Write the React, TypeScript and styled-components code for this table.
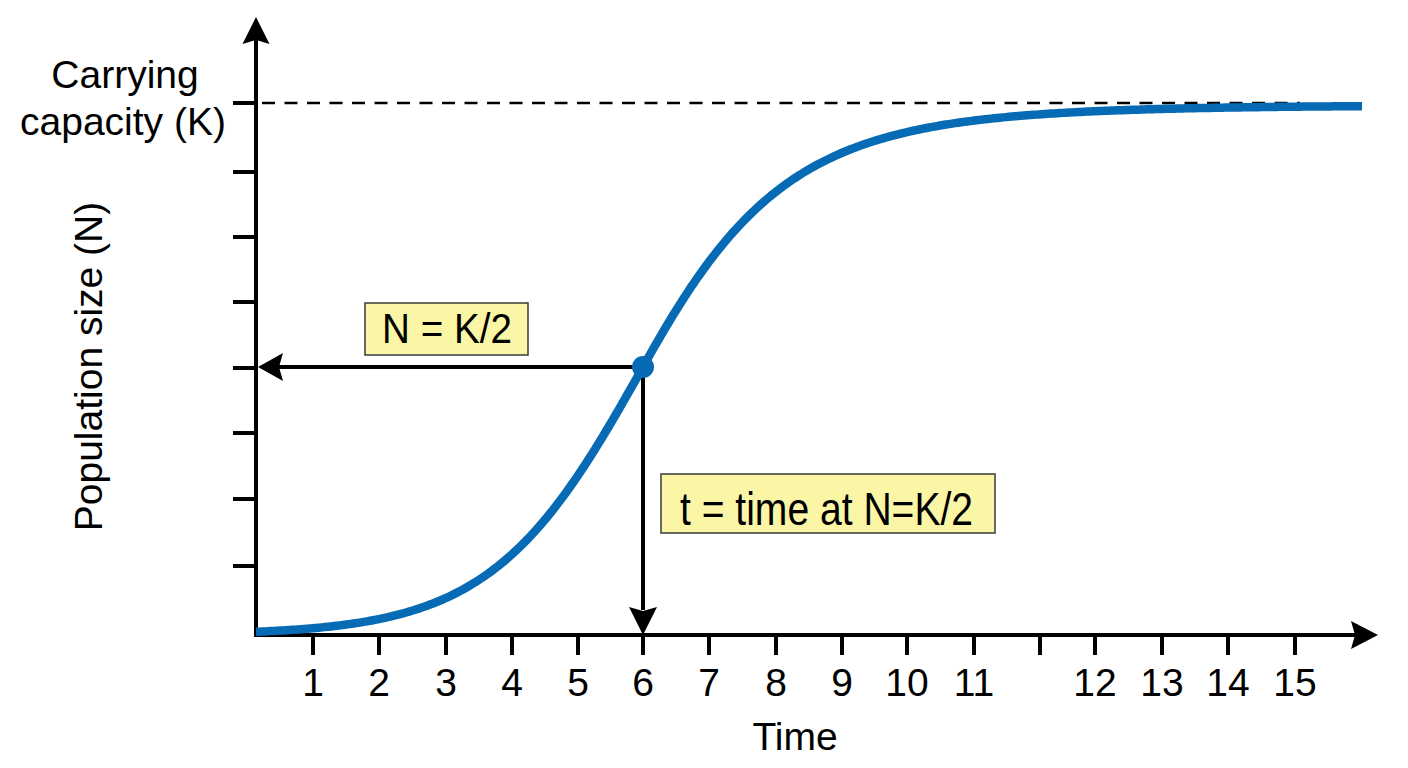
import React from 'react'
import styled, { createGlobalStyle } from 'styled-components'

const GlobalStyle = createGlobalStyle`
  html, body {
    margin: 0;
    padding: 0;
    background: #ffffff;
  }
  body {
    font-family: 'Liberation Sans', Arial, sans-serif;
  }
`

const Page = styled.main`
  width: 1408px;
  height: 768px;
  display: flex;
  align-items: stretch;
  justify-content: stretch;
  overflow: hidden;
  background: #ffffff;
`

const Chart = styled.svg`
  display: block;
  width: 1408px;
  height: 768px;
`

const Axis = styled.line`
  stroke: #000;
  stroke-width: 4;
`

const Tick = styled.line`
  stroke: #000;
  stroke-width: 4;
`

const Pointer = styled.line`
  stroke: #000;
  stroke-width: 4;
`

const Head = styled.polygon`
  fill: #000;
`

const CapacityLine = styled.line`
  stroke: #000;
  stroke-width: 2.5;
  stroke-dasharray: 13 9.5;
`

const Curve = styled.path`
  fill: none;
  stroke: #066bb4;
  stroke-width: 8.5;
  stroke-linecap: butt;
  stroke-linejoin: round;
`

const Marker = styled.circle`
  fill: #066bb4;
`

const Label = styled.text<{ $size?: number }>`
  font-family: 'Liberation Sans', Arial, Helvetica, sans-serif;
  font-size: ${(p) => p.$size ?? 39}px;
  fill: #000;
`

const CalloutBox = styled.rect`
  fill: #fbf6a6;
  stroke: #3a3a3a;
  stroke-width: 1.5;
`

const ORIGIN_X = 256
const ORIGIN_Y = 635
const MID = { x: 643, y: 367 }

const yTicks = [103, 172, 237, 302, 368, 433, 499, 566]

const xTicks: { x: number; label?: string }[] = [
  { x: 313, label: '1' },
  { x: 379, label: '2' },
  { x: 446, label: '3' },
  { x: 512, label: '4' },
  { x: 578, label: '5' },
  { x: 643, label: '6' },
  { x: 709, label: '7' },
  { x: 776, label: '8' },
  { x: 842, label: '9' },
  { x: 907, label: '10' },
  { x: 974, label: '11' },
  { x: 1040 },
  { x: 1095, label: '12' },
  { x: 1162, label: '13' },
  { x: 1228, label: '14' },
  { x: 1295, label: '15' },
]

// growth curve: logistic below the midpoint, slower approach to K above it
function curveY(x: number) {
  const d = x - MID.x
  if (d <= 0) return MID.y + 268 * Math.tanh(0.0066 * -d)
  return MID.y - 262 * Math.tanh(3.43 * Math.log(1 + 0.002 * d))
}

function curvePath(from: number, to: number, step = 3) {
  let d = `M ${from} ${curveY(from).toFixed(2)}`
  for (let x = from + step; x < to; x += step) {
    d += ` L ${x} ${curveY(x).toFixed(2)}`
  }
  d += ` L ${to} ${curveY(to).toFixed(2)}`
  return d
}

export default function App() {
  return (
    <Page>
      <GlobalStyle />
      <Chart viewBox="0 0 1408 768">
        {/* carrying capacity */}
        <CapacityLine x1={262} y1={103} x2={1300} y2={103} />

        {/* axes */}
        <Axis x1={ORIGIN_X} y1={ORIGIN_Y + 2} x2={ORIGIN_X} y2={40} />
        <Head points="256,17 269.5,44 256,40 242.5,44" />
        <Axis x1={ORIGIN_X - 2} y1={ORIGIN_Y} x2={1356} y2={ORIGIN_Y} />
        <Head points="1378,635 1351,621 1355,635 1351,649" />

        {yTicks.map((y) => (
          <Tick key={y} x1={233} y1={y} x2={ORIGIN_X} y2={y} />
        ))}
        {xTicks.map((t) => (
          <Tick key={t.x} x1={t.x} y1={ORIGIN_Y} x2={t.x} y2={655} />
        ))}
        {xTicks.map((t) =>
          t.label ? (
            <Label key={t.x} x={t.x} y={696} textAnchor="middle">
              {t.label}
            </Label>
          ) : null
        )}

        {/* axis titles */}
        <Label x={795} y={750} textAnchor="middle">
          Time
        </Label>
        <Label transform="translate(102 366.5) rotate(-90)" textAnchor="middle">
          Population size (N)
        </Label>
        <Label x={125} y={88} textAnchor="middle">
          Carrying
        </Label>
        <Label x={123} y={135} textAnchor="middle">
          capacity (K)
        </Label>

        {/* half-capacity guides */}
        <Pointer x1={MID.x} y1={MID.y} x2={278} y2={MID.y} />
        <Head points="258,367 283,353 279,367 283,381" />
        <Pointer x1={MID.x} y1={MID.y} x2={MID.x} y2={610} />
        <Head points="643,635 629,607 643,611 657,607" />

        {/* logistic curve */}
        <Curve d={curvePath(ORIGIN_X, 1362)} />
        <Marker cx={MID.x} cy={MID.y} r={11} />

        {/* callouts */}
        <CalloutBox x={365} y={303} width={163} height={52} />
        <Label x={382} y={343} $size={42} textLength={130} lengthAdjust="spacingAndGlyphs">
          N = K/2
        </Label>
        <CalloutBox x={661} y={474} width={334} height={59} />
        <Label x={680} y={525} $size={46} textLength={293} lengthAdjust="spacingAndGlyphs">
          t = time at N=K/2
        </Label>
      </Chart>
    </Page>
  )
}
